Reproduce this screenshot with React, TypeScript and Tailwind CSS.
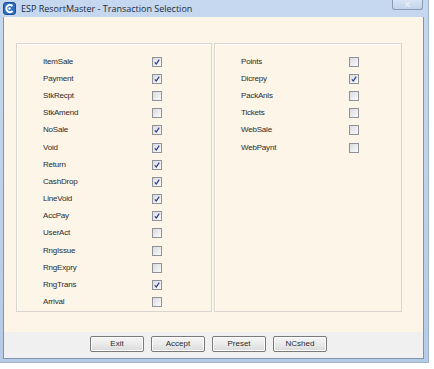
const leftItems: [string, boolean][] = [
  ["ItemSale", true],
  ["Payment", true],
  ["StkRecpt", false],
  ["StkAmend", false],
  ["NoSale", true],
  ["Void", true],
  ["Return", true],
  ["CashDrop", true],
  ["LineVoid", true],
  ["AccPay", true],
  ["UserAct", false],
  ["RngIssue", false],
  ["RngExpry", false],
  ["RngTrans", true],
  ["Arrival", false],
];

const rightItems: [string, boolean][] = [
  ["Points", false],
  ["Dicrepy", true],
  ["PackAnls", false],
  ["Tickets", false],
  ["WebSale", false],
  ["WebPaynt", false],
];

function CheckBox({ checked }: { checked: boolean }) {
  return (
    <span className="w-[10px] h-[10px] border border-[#8f9398] bg-gradient-to-br from-[#d9dbdf] to-[#fbfbfb] flex items-center justify-center">
      {checked && (
        <svg width="8" height="8" viewBox="0 0 8 8">
          <path d="M1.8 4.3 L3.3 6 L6.2 1.6" fill="none" stroke="#2a3a8c" strokeWidth="1.2" />
        </svg>
      )}
    </span>
  );
}

function Panel({ items, width, labelWidth }: { items: [string, boolean][]; width: string; labelWidth: string }) {
  return (
    <div className={`${width} h-full border border-[#dad6cf] shadow-[inset_1px_1px_0_#ffffff] pt-[9px] pl-[26px]`}>
      {items.map(([label, checked]) => (
        <div key={label} className="h-[17.2px] flex items-center">
          <span className={`${labelWidth} text-[8px] text-[#2b2b2b] tracking-[-0.2px]`}>{label}</span>
          <CheckBox checked={checked} />
        </div>
      ))}
    </div>
  );
}

function WinButton({ label }: { label: string }) {
  return (
    <button className="w-[54px] h-[16px] rounded-[2px] border border-[#7a7a7a] bg-gradient-to-b from-[#f4f4f4] via-[#ebebeb] to-[#d9d9d9] text-[8px] text-[#2b2b2b] flex items-center justify-center shadow-[inset_0_0_0_1px_#fcfcfc]">
      {label}
    </button>
  );
}

export default function App() {
  return (
    <div className="w-[434px] h-[369px] bg-white font-['Liberation_Sans',Arial,sans-serif]">
      <div className="w-[429px] h-[363px] bg-gradient-to-b from-[#c6d8ef] via-[#bfd2eb] to-[#b6cbe6] border-r border-b border-[#9fb3cf] flex flex-col pl-[3px] pr-[4px] pb-[3px]">
        {/* Title bar */}
        <div className="h-[17px] flex items-center relative">
          <svg width="13" height="13" viewBox="0 0 13 13" className="mr-[5px]">
            <rect x="0.5" y="0.5" width="12" height="12" rx="2.5" fill="#2f6fbf" stroke="#1d4d8e" />
            <path d="M9.5 4 A3.6 3.6 0 1 0 9.6 9" fill="none" stroke="#ffffff" strokeWidth="2" />
            <circle cx="6.5" cy="6.5" r="1.2" fill="#ffffff" />
          </svg>
          <span className="text-[9px] text-[#1e2a38] font-['Open_Sans',Arial,sans-serif]">
            ESP ResortMaster - Transaction Selection
          </span>
          <div className="absolute right-[1px] top-0 w-[31px] h-[10px] rounded-b-[3px] border border-t-0 border-[#8a9bb3] bg-gradient-to-b from-[#d8e4f3] to-[#c2d3ea] flex items-center justify-center">
            <span className="text-[8px] leading-none text-[#eef3fa] font-bold">X</span>
          </div>
        </div>

        {/* Client area */}
        <div className="flex-1 flex flex-col border-l border-r border-b border-[#7f93ae]">
          <div className="h-[315px] bg-[#fdf5e8] pt-[26px] pl-[12px]">
            <div className="h-[269px] flex gap-[2px]">
              <Panel items={leftItems} width="w-[196px]" labelWidth="w-[109px]" />
              <Panel items={rightItems} width="w-[188px]" labelWidth="w-[108px]" />
            </div>
          </div>
          <div className="flex-1 bg-[#f0f0f0] pt-[4px] pl-[86px] flex gap-[7px] items-start">
            <WinButton label="Exit" />
            <WinButton label="Accept" />
            <WinButton label="Preset" />
            <WinButton label="NCshed" />
          </div>
        </div>
      </div>
    </div>
  );
}
